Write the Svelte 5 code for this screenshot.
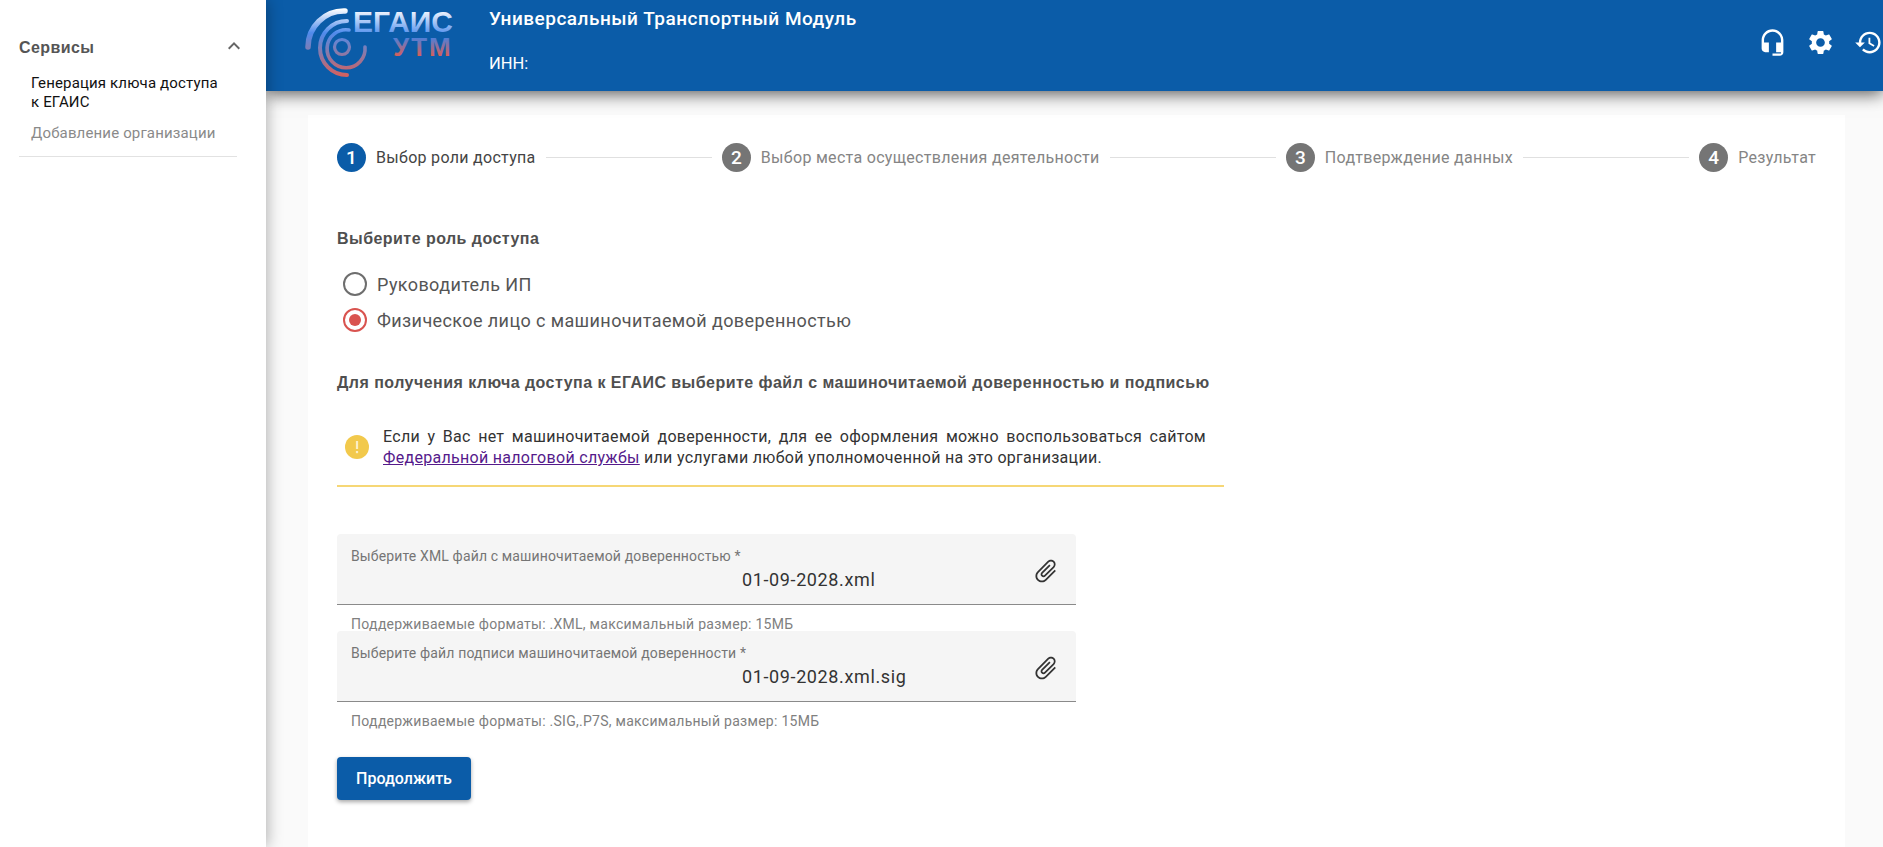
<script>
  const steps = [
    { num: 1, label: 'Выбор роли доступа', active: true },
    { num: 2, label: 'Выбор места осуществления деятельности' },
    { num: 3, label: 'Подтверждение данных' },
    { num: 4, label: 'Результат' }
  ];

  const files = [
    {
      label: 'Выберите XML файл с машиночитаемой доверенностью *',
      value: '01-09-2028.xml',
      hint: 'Поддерживаемые форматы: .XML, максимальный размер: 15МБ'
    },
    {
      label: 'Выберите файл подписи машиночитаемой доверенности *',
      value: '01-09-2028.xml.sig',
      hint: 'Поддерживаемые форматы: .SIG,.P7S, максимальный размер: 15МБ'
    }
  ];

  let role = 'proxy';
</script>

<div class="layout">
  <aside class="sidebar">
    <div class="nav-head">
      <span>Сервисы</span>
      <svg class="chevron" viewBox="0 0 24 24" width="24" height="24">
        <path d="M12 8l-6 6 1.41 1.41L12 10.83l4.59 4.58L18 14z" />
      </svg>
    </div>
    <div class="nav-item current">Генерация ключа доступа<br />к ЕГАИС</div>
    <div class="nav-item">Добавление организации</div>
    <div class="nav-divider"></div>
  </aside>

  <div class="main">
    <header class="topbar">
      <svg class="logo" viewBox="0 0 160 85" width="160" height="85">
        <defs>
          <linearGradient id="arcs" gradientUnits="userSpaceOnUse" x1="0" y1="9" x2="0" y2="77">
            <stop offset="0" stop-color="#ffffff" />
            <stop offset="0.35" stop-color="#4f8bec" />
            <stop offset="0.6" stop-color="#7f7db4" />
            <stop offset="1" stop-color="#d65f5b" />
          </linearGradient>
          <linearGradient id="top-word" gradientUnits="userSpaceOnUse" x1="0" y1="9" x2="0" y2="33">
            <stop offset="0" stop-color="#ffffff" />
            <stop offset="1" stop-color="#5c96ee" />
          </linearGradient>
          <linearGradient id="bottom-word" gradientUnits="userSpaceOnUse" x1="0" y1="36" x2="0" y2="56">
            <stop offset="0" stop-color="#3f83e6" />
            <stop offset="1" stop-color="#d65f5b" />
          </linearGradient>
        </defs>
        <g fill="none" stroke="url(#arcs)" stroke-linecap="round">
          <path d="M45 11 A36 36 0 0 0 8 47" stroke-width="5.5" />
          <path d="M47 21 A27 27 0 1 0 47 75" stroke-width="4" />
          <path d="M49 30 A19 19 0 1 0 65 47" stroke-width="3.6" />
          <circle cx="42" cy="47" r="7.5" stroke-width="3.2" />
        </g>
        <text x="53" y="32" class="logo-top" fill="url(#top-word)">ЕГАИС</text>
        <text x="93" y="55.5" class="logo-bottom" fill="url(#bottom-word)">УТМ</text>
      </svg>
      <div class="titles">
        <div class="app-name">Универсальный Транспортный Модуль</div>
        <div class="inn">ИНН:</div>
      </div>
      <div class="actions">
        <svg viewBox="0 0 24 24" width="29" height="29">
          <path d="M12 1c-4.97 0-9 4.03-9 9v7c0 1.66 1.34 3 3 3h3v-8H5v-2c0-3.87 3.13-7 7-7s7 3.13 7 7v2h-4v8h4v1h-7v2h6c1.66 0 3-1.34 3-3V10c0-4.97-4.03-9-9-9z" />
        </svg>
        <svg viewBox="0 0 24 24" width="29" height="29">
          <path d="M19.14 12.94c.04-.3.06-.61.06-.94 0-.32-.02-.64-.07-.94l2.03-1.58c.18-.14.23-.41.12-.61l-1.92-3.32c-.12-.22-.37-.29-.59-.22l-2.39.96c-.5-.38-1.03-.7-1.62-.94l-.36-2.54c-.04-.24-.24-.41-.48-.41h-3.84c-.24 0-.43.17-.47.41l-.36 2.54c-.59.24-1.13.57-1.62.94l-2.39-.96c-.22-.08-.47 0-.59.22L2.74 8.87c-.12.21-.08.47.12.61l2.03 1.58c-.05.3-.09.63-.09.94s.02.64.07.94l-2.03 1.58c-.18.14-.23.41-.12.61l1.92 3.32c.12.22.37.29.59.22l2.39-.96c.5.38 1.03.7 1.62.94l.36 2.54c.05.24.24.41.48.41h3.84c.24 0 .44-.17.47-.41l.36-2.54c.59-.24 1.13-.56 1.62-.94l2.39.96c.22.08.47 0 .59-.22l1.92-3.32c.12-.22.07-.47-.12-.61l-2.01-1.58zM12 15.6c-1.98 0-3.6-1.62-3.6-3.6s1.62-3.6 3.6-3.6 3.6 1.62 3.6 3.6-1.62 3.6-3.6 3.6z" />
        </svg>
        <svg viewBox="0 0 24 24" width="29" height="29">
          <path d="M13 3c-4.97 0-9 4.03-9 9H1l3.89 3.89.07.14L9 12H6c0-3.87 3.13-7 7-7s7 3.13 7 7-3.13 7-7 7c-1.93 0-3.68-.79-4.94-2.06l-1.42 1.42C8.27 19.99 10.51 21 13 21c4.97 0 9-4.03 9-9s-4.03-9-9-9zm-1 5v5l4.28 2.54.72-1.21-3.5-2.08V8H12z" />
        </svg>
      </div>
    </header>

    <main class="content">
      <section class="card">
        <div class="stepper">
          {#each steps as step, i}
            {#if i > 0}<div class="step-line"></div>{/if}
            <div class="step" class:active={step.active}>
              <span class="step-num">{step.num}</span>
              <span class="step-label">{step.label}</span>
            </div>
          {/each}
        </div>

        <h3 class="role-title">Выберите роль доступа</h3>
        <div class="radios">
          <label class="radio">
            <input type="radio" bind:group={role} value="ip" />
            <span class="dot"></span>
            Руководитель ИП
          </label>
          <label class="radio">
            <input type="radio" bind:group={role} value="proxy" />
            <span class="dot"></span>
            Физическое лицо с машиночитаемой доверенностью
          </label>
        </div>

        <h3 class="file-title">Для получения ключа доступа к ЕГАИС выберите файл с машиночитаемой доверенностью и подписью</h3>

        <div class="notice">
          <svg viewBox="0 0 24 24" width="24" height="24">
            <circle cx="12" cy="12" r="12" fill="#f2c94c" />
            <rect x="10.9" y="6" width="2.2" height="8" fill="#fbeec4" />
            <rect x="10.9" y="16" width="2.2" height="2.2" fill="#fbeec4" />
          </svg>
          <p>
            Если у Вас нет машиночитаемой доверенности, для ее оформления можно воспользоваться сайтом
            <a href="#fns">Федеральной налоговой службы</a> или услугами любой уполномоченной на это организации.
          </p>
        </div>

        <div class="fields">
          {#each files as file}
            <div class="field">
              <div class="field-box">
                <div class="field-label">{file.label}</div>
                <div class="field-value">{file.value}</div>
                <svg class="clip" viewBox="0 0 24 24" width="28" height="28">
                  <path transform="rotate(45 12 12)" d="M16.5 6v11.5c0 2.21-1.79 4-4 4s-4-1.79-4-4V5c0-1.38 1.12-2.5 2.5-2.5s2.5 1.12 2.5 2.5v10.5c0 .55-.45 1-1 1s-1-.45-1-1V6H10v9.5c0 1.38 1.12 2.5 2.5 2.5s2.5-1.12 2.5-2.5V5c0-2.21-1.79-4-4-4S7 2.79 7 5v12.5c0 3.04 2.46 5.5 5.5 5.5s5.5-2.46 5.5-5.5V6h-1.5z" />
                </svg>
              </div>
              <div class="field-hint">{file.hint}</div>
            </div>
          {/each}
        </div>

        <button class="next" type="button">Продолжить</button>
      </section>
    </main>
  </div>
</div>

<style>
  :global(body) {
    margin: 0;
    background: #fafafa;
    overflow: hidden;
  }

  .layout {
    display: flex;
    height: 847px;
    overflow: hidden;
    font-family: Roboto, "Liberation Sans", sans-serif;
  }

  .sidebar {
    position: relative;
    z-index: 3;
    flex: 0 0 266px;
    box-sizing: border-box;
    padding: 36px 29px 0 19px;
    background: #fff;
    box-shadow: 2px 0 14px rgba(0, 0, 0, 0.28);
  }

  .nav-head {
    display: flex;
    align-items: center;
    justify-content: space-between;
    height: 24px;
    font-family: "Liberation Sans", sans-serif;
    font-size: 16px;
    font-weight: 700;
    letter-spacing: 0.4px;
    color: #555;
    margin-bottom: 14px;
  }

  .chevron {
    fill: #666;
    margin: -5px -9px 0 0;
  }

  .nav-item {
    padding-left: 12px;
    font-size: 15px;
    line-height: 19px;
    letter-spacing: 0.15px;
    color: #8a8a8a;
    margin-bottom: 12px;
  }

  .nav-item.current {
    color: #111;
  }

  .nav-divider {
    height: 1px;
    background: #e2e2e2;
    margin-top: 13px;
  }

  .main {
    flex: 1;
    min-width: 0;
    display: flex;
    flex-direction: column;
  }

  .topbar {
    position: relative;
    z-index: 2;
    flex: 0 0 91px;
    display: flex;
    background: #0b5ca8;
    color: #fff;
    box-shadow: 0 3px 16px rgba(0, 0, 0, 0.65);
  }

  .logo {
    flex: none;
    margin-left: 34px;
  }

  .logo-top {
    font-family: "Liberation Sans", sans-serif;
    font-size: 30px;
    font-weight: 700;
  }

  .logo-bottom {
    font-family: "Liberation Sans", sans-serif;
    font-size: 26px;
    font-weight: 700;
    letter-spacing: 2px;
  }

  .titles {
    margin-left: 29px;
    padding-top: 9px;
  }

  .app-name {
    font-size: 19px;
    font-weight: 500;
    line-height: 20px;
    letter-spacing: 0.5px;
  }

  .inn {
    margin-top: 25px;
    font-size: 16.5px;
    line-height: 20px;
  }

  .actions {
    margin-left: auto;
    display: flex;
    gap: 19px;
    padding-top: 28px;
  }

  .actions svg {
    fill: #fff;
  }

  .content {
    flex: 1;
    min-height: 0;
    padding: 24px 38px 0 42px;
  }

  .card {
    box-sizing: border-box;
    height: 100%;
    background: #fff;
    padding: 28px 29px 0 29px;
  }

  .stepper {
    display: flex;
    align-items: center;
    height: 29px;
  }

  .step {
    display: flex;
    align-items: center;
    gap: 10px;
    font-size: 16px;
    letter-spacing: 0.3px;
    color: #858585;
    white-space: nowrap;
  }

  .step.active {
    color: #444;
  }

  .step-num {
    width: 29px;
    height: 29px;
    border-radius: 50%;
    background: #757575;
    color: #fff;
    font-size: 19px;
    font-weight: 500;
    letter-spacing: 0;
    display: flex;
    align-items: center;
    justify-content: center;
  }

  .step.active .step-num {
    background: #0b5ca8;
  }

  .step-line {
    flex: 1;
    height: 1px;
    background: #e0e0e0;
    margin: 0 10px;
  }

  h3 {
    margin: 0;
    font-family: "Liberation Sans", sans-serif;
    font-size: 16px;
    font-weight: 700;
    letter-spacing: 0.46px;
    color: #4f4f4f;
  }

  .role-title {
    margin-top: 57px;
    line-height: 20px;
  }

  .radios {
    margin-top: 17px;
    padding-left: 6px;
  }

  .radio {
    display: flex;
    align-items: center;
    height: 36px;
    font-size: 18px;
    letter-spacing: 0.4px;
    color: #555;
  }

  .radio input {
    position: absolute;
    opacity: 0;
    width: 0;
    height: 0;
  }

  .dot {
    box-sizing: border-box;
    width: 24px;
    height: 24px;
    margin-right: 10px;
    border: 2px solid #6e6e6e;
    border-radius: 50%;
    display: flex;
    align-items: center;
    justify-content: center;
  }

  .radio input:checked + .dot {
    border-color: #d9534f;
  }

  .radio input:checked + .dot::after {
    content: '';
    width: 12px;
    height: 12px;
    border-radius: 50%;
    background: #d9534f;
  }

  .file-title {
    margin-top: 35px;
    line-height: 20px;
  }

  .notice {
    display: flex;
    align-items: center;
    width: 887px;
    box-sizing: border-box;
    margin-top: 33px;
    padding: 0 18px 17px 8px;
    border-bottom: 2px solid #f6d776;
  }

  .notice svg {
    flex: none;
    margin-right: 14px;
  }

  .notice p {
    margin: 0;
    font-size: 16px;
    line-height: 21px;
    letter-spacing: 0.3px;
    color: #333;
    text-align: justify;
  }

  .notice a {
    color: #551a8b;
  }

  .fields {
    margin-top: 47px;
    width: 739px;
  }

  .field {
    height: 97px;
  }

  .field-box {
    position: relative;
    box-sizing: border-box;
    height: 71px;
    padding: 14px 14px 0;
    background: #f5f5f5;
    border-bottom: 1px solid #8a8a8a;
    border-radius: 4px 4px 0 0;
  }

  .field-label {
    font-size: 14px;
    line-height: 16px;
    letter-spacing: 0.14px;
    color: #757575;
  }

  .field-value {
    margin: 4px 0 0 391px;
    font-size: 18px;
    line-height: 24px;
    letter-spacing: 0.62px;
    color: #333;
  }

  .clip {
    position: absolute;
    right: 16px;
    top: 23px;
    fill: #333;
  }

  .field-hint {
    padding: 11px 14px 0;
    font-size: 14px;
    line-height: 16px;
    letter-spacing: 0.27px;
    color: #808080;
  }

  .next {
    display: block;
    margin-top: 29px;
    width: 134px;
    height: 43px;
    border: 0;
    border-radius: 4px;
    background: #0b5ca8;
    color: #fff;
    font-family: inherit;
    font-size: 16px;
    font-weight: 500;
    box-shadow: 0 2px 4px rgba(0, 0, 0, 0.35);
  }
</style>
